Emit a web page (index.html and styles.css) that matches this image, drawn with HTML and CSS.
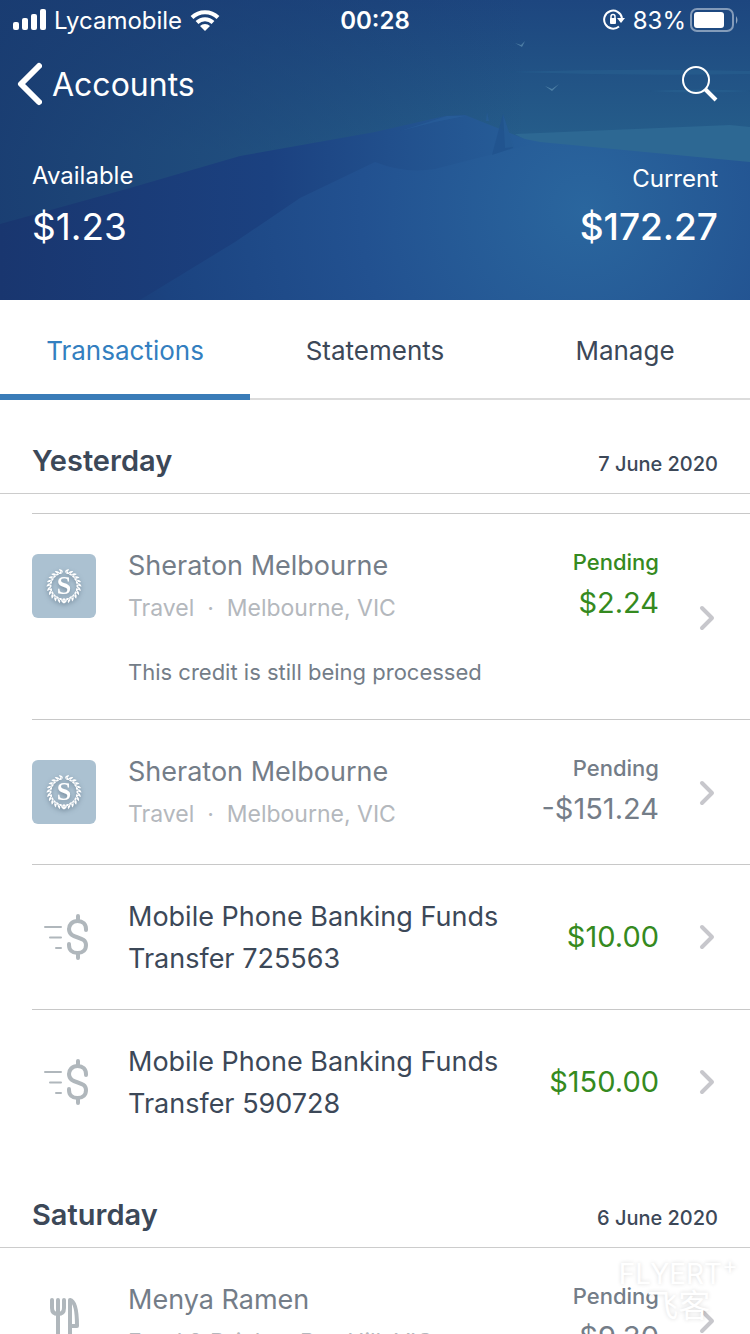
FILE: index.html
```html
<!DOCTYPE html>
<html lang="en">
<head>
    <meta charset="UTF-8">
    <meta name="viewport" content="width=device-width, initial-scale=1.0">
    <title>Accounts</title>
    <link rel="stylesheet" href="styles.css">
</head>
<body>
    <!-- shared icons -->
    <svg class="sprite" aria-hidden="true">
        <symbol id="chevron" viewBox="0 0 16 28">
            <path d="M3 4l10 10L3 24" fill="none" stroke="#c7c7cc" stroke-width="4" stroke-linecap="round" stroke-linejoin="round"/>
        </symbol>
        <symbol id="transfer" viewBox="0 0 64 64">
            <g fill="none" stroke="#b0b7bc" stroke-linecap="round">
                <path d="M13 22h16M18 32.500h11M24 43h5" stroke-width="2"/>
                <path d="M54 25v-1c0-5-3-8-8.500-8S37 20 37 24c0 11 17 6 17 16 0 5-3 8-8.500 8S37 45 37 40v-1M46 11v5M46 49v4" stroke-width="4"/>
            </g>
        </symbol>
        <symbol id="leaves" viewBox="0 0 64 64">
            <path d="M31 19c-1-2 0-3.500 3-4.500 0 2-1 3.500-3 4.500zM31 18c0 1 2 2.500 4 1-1-1.500-2-2-4-1z"/>
        </symbol>
        <symbol id="sheraton" viewBox="0 0 64 64">
            <g id="branch" fill="#fff">
                <use href="#leaves" transform="rotate(10 32 32)"/>
                <use href="#leaves" transform="rotate(25 32 32)"/>
                <use href="#leaves" transform="rotate(40 32 32)"/>
                <use href="#leaves" transform="rotate(55 32 32)"/>
                <use href="#leaves" transform="rotate(70 32 32)"/>
                <use href="#leaves" transform="rotate(85 32 32)"/>
                <use href="#leaves" transform="rotate(100 32 32)"/>
                <use href="#leaves" transform="rotate(115 32 32)"/>
                <use href="#leaves" transform="rotate(130 32 32)"/>
                <use href="#leaves" transform="rotate(145 32 32)"/>
                <use href="#leaves" transform="rotate(160 32 32)"/>
                <use href="#leaves" transform="rotate(174 32 32)"/>
            </g>
            <use href="#branch" transform="matrix(-1 0 0 1 64 0)"/>
            <text x="32" y="40" text-anchor="middle" class="logo-letter">S</text>
        </symbol>
        <symbol id="dining" viewBox="0 0 64 64">
            <g fill="none" stroke="#b0b7bc" stroke-width="4" stroke-linecap="round" stroke-linejoin="round">
                <path d="M20 12v8c0 4 2 6 6 6s6-2 6-6v-8M26 12v40M38 52V12c5 1 7 12 7 26h-6"/>
            </g>
        </symbol>
    </svg>

    <div class="app">
        <header class="header">
            <svg class="scene" viewBox="0 0 750 300" preserveAspectRatio="none" aria-hidden="true">
                <defs>
                    <linearGradient id="sky" x1="0" y1="0" x2="0" y2="1">
                        <stop offset="0" stop-color="#1d467f"/>
                        <stop offset="0.500" stop-color="#265f8b"/>
                    </linearGradient>
                    <linearGradient id="skyShade">
                        <stop offset="0" stop-color="#193b70" stop-opacity="0.900"/>
                        <stop offset="0.700" stop-color="#193b70" stop-opacity="0"/>
                    </linearGradient>
                    <radialGradient id="land" gradientUnits="userSpaceOnUse" cx="585" cy="210" r="500">
                        <stop offset="0" stop-color="#2a669e"/>
                        <stop offset="0.450" stop-color="#225190"/>
                        <stop offset="0.850" stop-color="#1b4380"/>
                        <stop offset="1" stop-color="#1a3a73"/>
                    </radialGradient>
                    <linearGradient id="hill">
                        <stop offset="0" stop-color="#19366f"/>
                        <stop offset="0.500" stop-color="#1b4180"/>
                        <stop offset="0.720" stop-color="#214f8c"/>
                        <stop offset="1" stop-color="#275f9a"/>
                    </linearGradient>
                </defs>
                <rect width="750" height="300" fill="url(#sky)"/>
                <rect width="750" height="300" fill="url(#skyShade)"/>
                <path d="M510 72q120-4 240-1v3q-120 2-240-2zM650 91q50-3 100 0-50 3-100 0z" fill="#2f6d9d" opacity="0.300"/>
                <path d="M515 134l215-9 20 2v42l-210-20z" fill="#2d6893"/>
                <path d="M0 224l130-36 110-32 135-24 70-16 20-1 60 24 15 3v30L140 300H0z" fill="url(#hill)"/>
                <path d="M140 300l95-58 65-44 75-36q30 12 60 7l105-27 210 20v138z" fill="url(#land)"/>
                <path d="M400 131l47-15h18l-30 6z" fill="#2f66a3" opacity="0.350"/>
                <path d="M503 114l-11 41 21-7z" fill="#20528d" opacity="0.800"/>
                <path d="M503 114l2 34 9-1zM487 112l2 9h-3z" fill="#275c96" opacity="0.800"/>
                <path d="M515 43l6 2 4-4-3 6zM545 86l7 3 7-5-7 7z" fill="#6b9cbb" opacity="0.600"/>
            </svg>

            <div class="status-bar">
                <div class="status-left">
                    <svg width="34" height="22" viewBox="0 0 34 22" fill="#fff" aria-hidden="true">
                        <rect x="1" y="13" width="6" height="8" rx="2"/>
                        <rect x="10" y="9" width="6" height="12" rx="2"/>
                        <rect x="19" y="5" width="6" height="16" rx="2"/>
                        <rect x="28" y="0" width="6" height="21" rx="2"/>
                    </svg>
                    <span>Lycamobile</span>
                    <svg width="30" height="22" viewBox="0 0 30 22" aria-hidden="true">
                        <g fill="none" stroke="#fff" stroke-width="4">
                            <path d="M2 8.500a18.500 18.500 0 0 1 26 0"/>
                            <path d="M7 13.500a11.500 11.500 0 0 1 16 0"/>
                        </g>
                        <path d="M15 22l-5-5a7 7 0 0 1 10 0z" fill="#fff"/>
                    </svg>
                </div>
                <span class="status-time">00:28</span>
                <div class="status-right">
                    <svg class="lock" width="22" height="22" viewBox="0 0 22 22" aria-hidden="true">
                        <path d="M16 17.500a9 9 0 1 1 3-8.500" fill="none" stroke="#fff" stroke-width="2"/>
                        <path d="M14 9h8l-4 5z" fill="#fff"/>
                        <rect x="7" y="9" width="6" height="6" rx="1" fill="#fff"/>
                        <path d="M8 10V7.500a2 2 0 0 1 4 0V10" fill="none" stroke="#fff" stroke-width="1.500"/>
                    </svg>
                    <span class="battery-text">83%</span>
                    <svg width="48" height="24" viewBox="0 0 48 24" aria-hidden="true">
                        <rect x="1" y="1" width="42" height="22" rx="6" fill="none" stroke="#fff" stroke-opacity="0.450" stroke-width="2"/>
                        <rect x="4" y="4" width="30" height="16" rx="3" fill="#fff"/>
                        <path d="M46 8q3 4 0 8z" fill="#fff" fill-opacity="0.500"/>
                    </svg>
                </div>
            </div>

            <div class="nav-bar">
                <a class="back" href="#">
                    <svg width="26" height="44" viewBox="0 0 26 44" aria-hidden="true">
                        <path d="M23 4L5 22l18 18" fill="none" stroke="#fff" stroke-width="6" stroke-linecap="round" stroke-linejoin="round"/>
                    </svg>
                    Accounts
                </a>
                <button class="search" aria-label="Search">
                    <svg width="36" height="36" viewBox="0 0 36 36" fill="none" stroke="#fff" aria-hidden="true">
                        <circle cx="14" cy="14" r="13" stroke-width="2"/>
                        <path d="M23 23l11 11" stroke-width="4"/>
                    </svg>
                </button>
            </div>

            <div class="balances">
                <div class="balance">
                    <span class="balance-label">Available</span>
                    <span class="balance-value">$1.23</span>
                </div>
                <div class="balance balance-current">
                    <span class="balance-label">Current</span>
                    <span class="balance-value">$172.27</span>
                </div>
            </div>
        </header>

        <nav class="tabs">
            <a class="tab active" href="#">Transactions</a>
            <a class="tab" href="#">Statements</a>
            <a class="tab" href="#">Manage</a>
        </nav>

        <main class="feed">
            <section>
                <div class="day">
                    <h2>Yesterday</h2>
                    <time datetime="2020-06-07">7 June 2020</time>
                </div>
                <ul class="list list-spaced">
                    <li>
                        <a class="row pending" href="#">
                            <svg class="icon merchant"><use href="#sheraton"/></svg>
                            <div class="info">
                                <p class="title">Sheraton Melbourne</p>
                                <p class="detail">Travel&nbsp; · &nbsp;Melbourne, VIC</p>
                                <p class="note">This credit is still being processed</p>
                            </div>
                            <div class="amount credit">
                                <span class="state">Pending</span>
                                <span class="sum">$2.24</span>
                            </div>
                            <svg class="chevron"><use href="#chevron"/></svg>
                        </a>
                    </li>
                    <li>
                        <a class="row pending" href="#">
                            <svg class="icon merchant"><use href="#sheraton"/></svg>
                            <div class="info">
                                <p class="title">Sheraton Melbourne</p>
                                <p class="detail">Travel&nbsp; · &nbsp;Melbourne, VIC</p>
                            </div>
                            <div class="amount">
                                <span class="state">Pending</span>
                                <span class="sum">-$151.24</span>
                            </div>
                            <svg class="chevron"><use href="#chevron"/></svg>
                        </a>
                    </li>
                    <li>
                        <a class="row" href="#">
                            <svg class="icon"><use href="#transfer"/></svg>
                            <div class="info">
                                <p class="title">Mobile Phone Banking Funds Transfer 725563</p>
                            </div>
                            <div class="amount credit">
                                <span class="sum">$10.00</span>
                            </div>
                            <svg class="chevron"><use href="#chevron"/></svg>
                        </a>
                    </li>
                    <li>
                        <a class="row" href="#">
                            <svg class="icon"><use href="#transfer"/></svg>
                            <div class="info">
                                <p class="title">Mobile Phone Banking Funds Transfer 590728</p>
                            </div>
                            <div class="amount credit">
                                <span class="sum">$150.00</span>
                            </div>
                            <svg class="chevron"><use href="#chevron"/></svg>
                        </a>
                    </li>
                </ul>
            </section>

            <section>
                <div class="day">
                    <h2>Saturday</h2>
                    <time datetime="2020-06-06">6 June 2020</time>
                </div>
                <ul class="list">
                    <li>
                        <a class="row pending" href="#">
                            <svg class="icon"><use href="#dining"/></svg>
                            <div class="info">
                                <p class="title">Menya Ramen</p>
                                <p class="detail">Food &amp; Drink&nbsp; · &nbsp;Box Hill, VIC</p>
                            </div>
                            <div class="amount">
                                <span class="state">Pending</span>
                                <span class="sum">$9.30</span>
                            </div>
                            <svg class="chevron"><use href="#chevron"/></svg>
                        </a>
                    </li>
                </ul>
            </section>
        </main>

        <div class="watermark">
            <span class="watermark-name">FLYERT<sup>+</sup></span>
            <span class="watermark-cn" lang="zh">飞客</span>
        </div>
    </div>
</body>
</html>
```
FILE: styles.css
```css
* {
    box-sizing: border-box;
}
body {
    margin: 0;
    font-family: Inter, "Noto Sans CJK SC", sans-serif;
    font-size: 27px;
    color: #3c4858;
    background-color: white;
}
h2, p, ul {
    margin: 0;
    padding: 0;
}
a {
    color: inherit;
    text-decoration: none;
}
svg {
    display: block;
    flex: none;
}
.sprite {
    position: absolute;
    width: 0;
    height: 0;
}
.app {
    position: relative;
    display: flex;
    flex-direction: column;
    height: 100vh;
    overflow: hidden;
}

/* header */
.header {
    position: relative;
    flex: none;
    padding-bottom: 38px;
    color: white;
    background-color: #1d467f;
}
.scene {
    position: absolute;
    inset: 0;
    width: 100%;
    height: 100%;
}
.status-bar,
.nav-bar,
.balances {
    position: relative;
}
.status-bar {
    display: grid;
    grid-template-columns: 1fr auto 1fr;
    align-items: center;
    height: 40px;
    padding: 0 12px;
    font-size: 24px;
}
.status-left,
.status-right {
    display: flex;
    align-items: center;
    gap: 8px;
}
.status-right {
    justify-content: flex-end;
    gap: 4px;
}
.lock {
    margin-right: 4px;
}
.status-time {
    font-weight: 600;
}
.nav-bar {
    display: flex;
    justify-content: space-between;
    align-items: center;
    height: 88px;
    padding: 0 32px 0 16px;
}
.back {
    display: flex;
    align-items: center;
    gap: 10px;
    font-size: 32px;
}
.search {
    padding: 0;
    border: none;
    background: none;
    cursor: pointer;
}
.balances {
    display: flex;
    justify-content: space-between;
    align-items: flex-end;
    padding: 32px 32px 0;
}
.balance {
    display: flex;
    flex-direction: column;
}
.balance-label {
    font-size: 24px;
    line-height: 32px;
}
.balance-value {
    font-size: 37px;
    line-height: 70px;
}
.balance-current {
    text-align: right;
}
.balance-current .balance-label {
    line-height: 26px;
}
.balance-current .balance-value {
    font-weight: 500;
}

/* tabs */
.tabs {
    display: flex;
    flex: none;
    height: 100px;
    box-shadow: inset 0 -2px #dcdcdc;
}
.tab {
    flex: 1;
    display: flex;
    align-items: center;
    justify-content: center;
    padding-top: 6px;
    border-bottom: 6px solid transparent;
    font-size: 26px;
}
.tab.active {
    color: #337fc0;
    border-bottom-color: #3a7cb8;
}

/* transactions */
.feed {
    flex: 1;
    overflow-y: auto;
    scrollbar-width: none;
}
.day {
    display: flex;
    justify-content: space-between;
    align-items: baseline;
    height: 94px;
    padding: 40px 32px 0;
    border-bottom: 1px solid #cccccc;
}
.day h2 {
    font-size: 29px;
    font-weight: 600;
    line-height: 42px;
}
.day time {
    font-size: 20px;
    font-weight: 500;
}
.list {
    list-style: none;
}
.list-spaced {
    padding-top: 19px;
}
.list li {
    margin-left: 32px;
}
.list-spaced li {
    border-top: 1px solid #c8c8c8;
}
.row {
    display: flex;
    align-items: flex-start;
    padding: 30px 35px 30px 0;
}
.icon {
    width: 64px;
    height: 64px;
    margin: 10px 32px 10px 0;
}
.merchant {
    border-radius: 6px;
    background-color: #abc1d1;
}
.merchant use {
    filter: drop-shadow(0 2px 2px rgba(60, 80, 100, 0.5));
}
.logo-letter {
    font: bold 26px "Liberation Serif", serif;
    fill: white;
}
.info {
    flex: 1;
    line-height: 42px;
}
.pending {
    padding-bottom: 28px;
    color: #747d88;
}
.title {
    padding-top: 1px;
    margin-bottom: -1px;
}
.detail {
    font-size: 23px;
    line-height: 44px;
    color: #b4b8bd;
}
.note {
    margin: 27px 0 4px;
    font-size: 22px;
    line-height: 30px;
}
.amount {
    display: flex;
    flex-direction: column;
    justify-content: center;
    height: 84px;
    margin-right: 40px;
    text-align: right;
}
.pending .amount {
    height: 82px;
    margin-bottom: 4px;
}
.state {
    font-size: 22px;
    font-weight: 500;
    line-height: 36px;
}
.sum {
    font-size: 29px;
    line-height: 46px;
}
.credit {
    color: #358a20;
}
.chevron {
    align-self: center;
    width: 16px;
    height: 28px;
}

.watermark {
    position: absolute;
    right: 12px;
    bottom: 12px;
    display: flex;
    flex-direction: column;
    align-items: center;
    color: white;
    text-shadow: 0 0 4px rgba(0, 0, 0, 0.15);
    pointer-events: none;
}
.watermark-name {
    font-size: 28px;
    line-height: 32px;
}
.watermark-name sup {
    font-size: 24px;
    line-height: 0;
}
.watermark-cn {
    font-size: 32px;
    line-height: 32px;
}
```
